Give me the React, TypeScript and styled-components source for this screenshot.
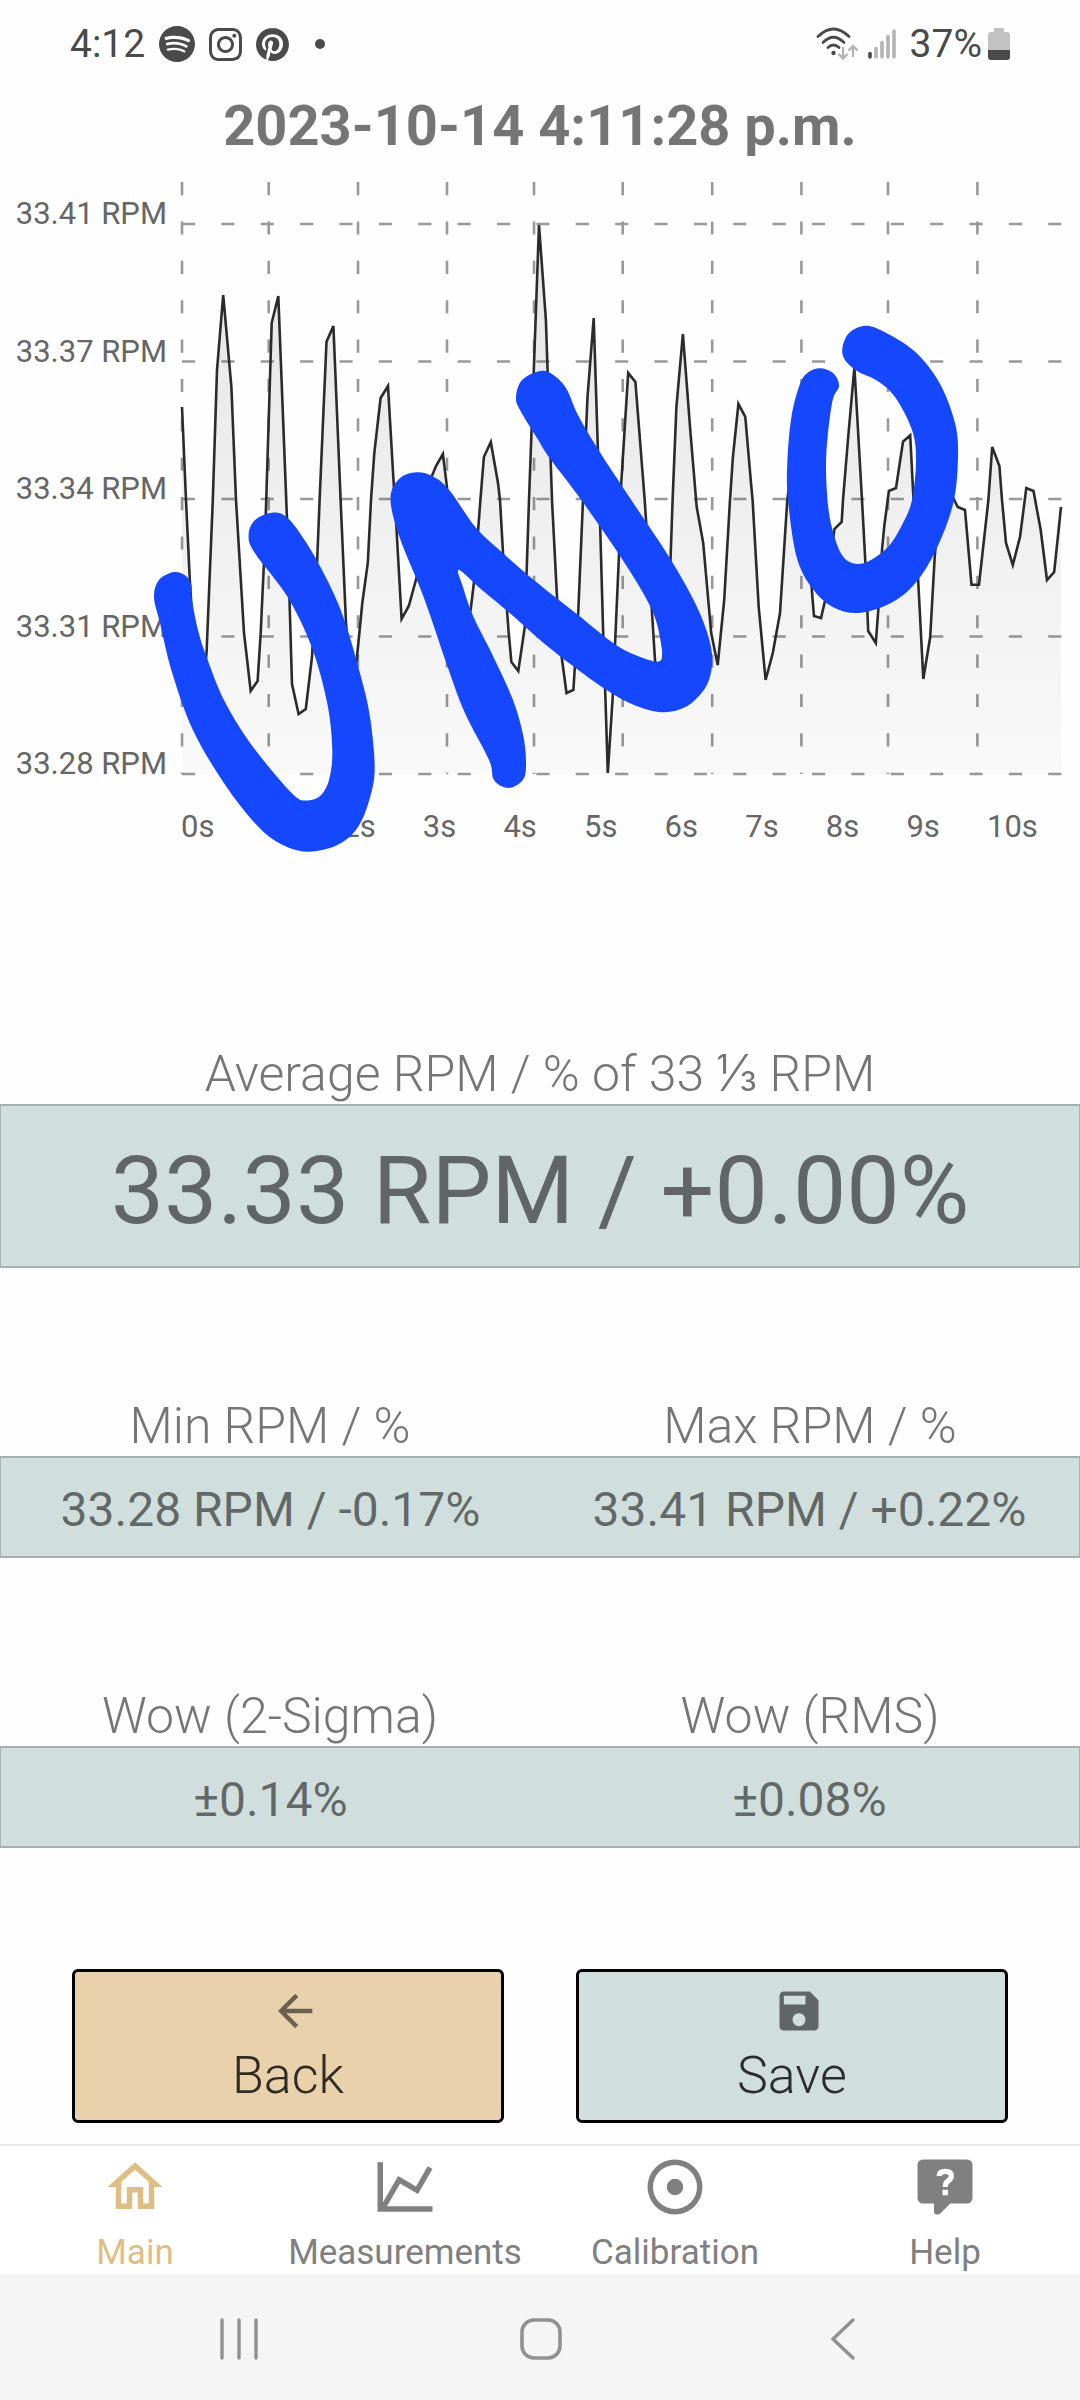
import React from "react";
import styled, { createGlobalStyle } from "styled-components";
import { SiInstagram, SiPinterest, SiSpotify } from "react-icons/si";

type Point = [number, number];

const GlobalStyle = createGlobalStyle`
  *, *::before, *::after { box-sizing: border-box; }
  body {
    margin: 0;
    background: #fefefe;
    color: rgba(0, 0, 0, 0.54);
    font-family: Roboto, Inter, "Liberation Sans", sans-serif;
  }
`;

const Screen = styled.div`
  display: flex;
  flex-direction: column;
  min-height: 100vh;
`;

/* ---------- status bar ---------- */

const StatusBar = styled.header`
  display: flex;
  align-items: center;
  justify-content: space-between;
  height: 88px;
  padding: 0 70px;
  color: #4a4a4a;
  font-size: 39px;
`;

const StatusGroup = styled.div<{ $gap: number }>`
  display: flex;
  align-items: center;
  gap: ${(p) => p.$gap}px;
`;

const Dot = styled.span`
  width: 10px;
  height: 10px;
  margin-left: 12px;
  border-radius: 50%;
  background: currentColor;
`;

const Battery = styled.span`
  display: flex;
  align-items: center;
  gap: 6px;
  margin-left: 4px;
`;

/* ---------- chart ---------- */

const Main = styled.main`
  display: flex;
  flex-direction: column;
  flex: 1;
`;

const Title = styled.h1`
  margin: 0;
  font-size: 56px;
  line-height: 76px;
  font-weight: 700;
  text-align: center;
`;

const ChartSvg = styled.svg`
  display: block;
  width: 100%;
  height: auto;
`;

const AxisText = styled.text`
  fill: #666;
  font-size: 31px;
`;

/* ---------- readings ---------- */

const Readings = styled.div`
  display: flex;
  flex-direction: column;
  gap: 128px;
  padding-top: 180px;
`;

const Reading = styled.dl<{ $columns: number }>`
  display: grid;
  grid-template-columns: repeat(${(p) => p.$columns}, 1fr);
  grid-template-rows: 60px auto;
  grid-auto-flow: column;
  margin: 0;
  text-align: center;
`;

const ReadingLabel = styled.dt`
  font-size: 50px;
  line-height: 60px;
  font-weight: 300;
`;

const ReadingValue = styled.dd<{ $large?: boolean }>`
  margin: 0;
  padding-top: ${(p) => (p.$large ? 10 : 6)}px;
  border: solid rgba(0, 0, 0, 0.2);
  border-width: 2px 0;
  background: #d0dedd;
  font-size: ${(p) => (p.$large ? 95 : 48)}px;
  line-height: ${(p) => (p.$large ? 150 : 92)}px;

  &:first-of-type { border-left-width: 1px; }
  &:last-of-type { border-right-width: 1px; }
`;

/* ---------- actions ---------- */

const Actions = styled.div`
  display: grid;
  grid-template-columns: 1fr 1fr;
  gap: 72px;
  padding: 121px 72px 21px;
`;

const ActionButton = styled.button<{ $color: string }>`
  display: flex;
  flex-direction: column;
  align-items: center;
  gap: 8px;
  padding: 13px;
  border: 3px solid #000;
  border-radius: 6px;
  background: ${(p) => p.$color};
  color: rgba(0, 0, 0, 0.8);
  font: inherit;
  font-size: 52px;
  line-height: 62px;
  font-weight: 300;

  svg {
    margin-left: 14px;
    fill: rgba(0, 0, 0, 0.54);
  }
`;

/* ---------- bottom bars ---------- */

const TabBar = styled.nav`
  display: grid;
  grid-template-columns: repeat(4, 1fr);
  height: 130px;
  border-top: 2px solid #e6e6e6;
  background: #fff;
`;

const Tab = styled.a<{ $active?: boolean }>`
  display: flex;
  flex-direction: column;
  align-items: center;
  gap: 12px;
  padding-top: 8px;
  color: ${(p) => (p.$active ? "#dfbe86" : "#808080")};
  font-size: 35px;
  line-height: 42px;
  text-decoration: none;

  svg { fill: currentColor; }
`;

const SystemBar = styled.footer`
  display: grid;
  grid-template-columns: repeat(3, 1fr);
  height: 126px;
  padding: 0 86px 0 88px;
  background: #f5f5f5;
`;

const SystemButton = styled.button`
  display: flex;
  align-items: center;
  justify-content: center;
  padding: 4px 0 0;
  border: 0;
  background: none;
  color: #919191;
`;

/* ---------- data ---------- */

const gridRows: { y: number; label: string }[] = [
  { y: 224, label: "33.41 RPM" },
  { y: 361.5, label: "33.37 RPM" },
  { y: 499, label: "33.34 RPM" },
  { y: 636.5, label: "33.31 RPM" },
  { y: 774, label: "33.28 RPM" },
];

const gridColumns = [182, 268.7, 358, 447, 534, 622.7, 712.2, 801.4, 888, 977.4];

const seconds = Array.from({ length: 11 }, (_, i) => i);

const trace: Point[] = [
  [182, 407], [186, 500], [189.8, 580], [196, 680], [202, 700], [206.6, 652], [212.8, 500],
  [217, 370], [223.2, 295], [231.4, 387], [236, 500], [244, 633], [250.7, 691], [257.6, 681],
  [260.7, 633], [265, 540], [271.7, 323], [278.3, 296], [286.9, 517], [289.6, 603], [292, 684],
  [298.6, 714], [305.8, 709], [312, 657], [317.2, 560], [319.6, 500], [326.5, 341.7],
  [333.4, 326], [340.6, 500], [346, 623], [352, 690], [357, 657], [362.3, 603], [367.8, 563],
  [371, 500], [374.3, 453], [380.6, 398], [388, 386], [393.3, 477], [396, 520], [401.6, 619],
  [408.8, 606], [416.7, 577], [422, 520], [429, 483], [436, 466], [442.9, 454], [446.7, 485],
  [453, 560], [460, 625], [466, 640], [471, 607], [474.6, 577], [480.4, 500], [483.9, 457],
  [490.8, 442], [498, 483], [500, 500], [503.8, 567], [508.7, 633], [511.4, 662], [518.3, 671],
  [524.8, 627], [529, 500], [533.8, 370], [539, 225], [545.9, 320], [548, 383], [552, 500],
  [557, 597], [561.7, 657], [566.5, 693], [573.4, 690], [578.2, 613], [583, 500], [587.5, 397],
  [593.7, 318], [597.9, 450], [600, 520], [603, 627], [605.4, 697], [607.8, 773], [612.7, 697],
  [615.8, 627], [618.9, 557], [621, 487], [628.2, 373], [635.4, 382], [644.7, 500], [652.3, 617],
  [655, 660], [660, 690], [665, 640], [670.5, 560], [672.6, 500], [676.4, 407], [682.9, 334],
  [690.5, 433], [696.7, 507], [703.2, 543], [711.2, 633], [717.7, 665], [724.2, 600], [730, 500],
  [732.9, 457], [738.4, 404], [745.3, 417], [751, 483], [752.6, 500], [758.7, 607], [765.6, 680],
  [772.8, 653], [780, 613], [787.3, 500], [797, 430], [805, 500], [812.4, 597], [814, 616],
  [821, 618], [825.2, 600], [834.4, 529], [841.7, 522], [843, 500], [848.2, 437], [854.4, 367],
  [862, 500], [865.4, 563], [868.2, 631], [875.8, 643], [878.5, 607], [882, 550], [884.4, 525],
  [888.9, 491], [896, 488], [903, 441.7], [910.2, 435.3], [913, 490], [918, 577], [923.3, 679],
  [930.2, 637], [934.7, 557], [942, 475], [953.3, 498], [957.7, 507], [965, 510], [971.5, 584.7],
  [979, 584.7], [988.4, 500], [992.2, 447], [999.4, 466], [1002, 500], [1006, 543], [1012.8, 565],
  [1020, 537], [1026.3, 488], [1033.5, 491], [1040.7, 530], [1047, 580], [1054.2, 572], [1061, 507],
];

/* Outlines of the three marker letters scribbled over the chart. */
const scribbles: Point[][] = [
  [
    [174, 572], [186, 576], [191.5, 586], [191.5, 597], [198, 630], [206.6, 657], [223.9, 700],
    [248, 740], [275.5, 775], [296, 797], [306.5, 800.5], [320, 796], [329, 780], [332.3, 750],
    [327.2, 703], [311.7, 647], [287.6, 597], [254.8, 553], [248.6, 535], [255, 520], [272, 512.7],
    [287.6, 518], [306.5, 543], [327.2, 580], [344.4, 620], [361, 677], [370, 717], [374.7, 767],
    [370.2, 797], [358, 827], [337.5, 845], [306.5, 851.7], [279, 843], [254.8, 823], [223.9, 783],
    [192.9, 730], [172.2, 673], [160, 623], [154, 597], [159, 580],
  ],
  [
    [508, 788], [494, 780], [489, 760], [464.9, 713], [447.7, 667], [423.6, 597], [399.5, 537],
    [390.5, 499], [399, 479], [416.7, 472.3], [434, 477], [450, 491], [475.3, 527], [502.8, 553],
    [540, 585], [578, 615], [616, 645], [643, 658], [660, 661], [661.5, 647], [652, 610],
    [622.7, 560], [581.3, 500], [550.3, 459], [537, 438], [520, 410], [516, 397], [522, 380],
    [540, 371], [552, 374], [566, 388], [578, 415], [598.5, 450], [631.3, 500], [671, 560],
    [698.4, 610], [711.5, 650], [709, 680], [695, 700], [678, 710], [657, 711.7], [629.5, 703],
    [602, 687], [567.6, 662], [540, 640], [509.7, 613], [482, 590], [459, 570], [463, 587],
    [473.5, 617], [492.5, 655], [513, 700], [523.5, 737], [526, 767], [522, 781],
  ],
  [
    [821, 368.3], [834, 374], [839, 386], [832.7, 400], [827.6, 437], [826, 470], [828.6, 510],
    [834.5, 537], [842, 555], [852, 563], [867, 562], [888, 547], [902, 525], [912, 500],
    [916, 460], [912, 430], [895, 397], [877.5, 381], [857, 371], [845, 360], [842.4, 348],
    [849, 333], [865.4, 325.7], [884.4, 332], [915.4, 352], [939.5, 383], [955, 423], [958, 457],
    [953.3, 503], [936, 550], [915.4, 583], [891, 603], [859, 613], [832.7, 607], [812, 588],
    [796.6, 557], [788, 500], [787.3, 463], [791.4, 417], [800, 384], [808.6, 372],
  ],
];

const tracePath = "M" + trace.map((p) => p.join(",")).join("L");

/* Closed Catmull-Rom spline through the points. */
function smoothOutline(points: Point[]): string {
  const n = points.length;
  let d = `M${points[0].join(",")}`;
  for (let i = 0; i < n; i++) {
    const p0 = points[(i + n - 1) % n];
    const p1 = points[i];
    const p2 = points[(i + 1) % n];
    const p3 = points[(i + 2) % n];
    const c1 = [p1[0] + (p2[0] - p0[0]) / 6, p1[1] + (p2[1] - p0[1]) / 6];
    const c2 = [p2[0] - (p3[0] - p1[0]) / 6, p2[1] - (p3[1] - p1[1]) / 6];
    d += `C${c1.join(",")} ${c2.join(",")} ${p2.join(",")}`;
  }
  return d + "Z";
}

const icons = {
  home: "M12 5.69L17 10.19V18H15V12H9V18H7V10.19L12 5.69M12 3L2 12H5V20H11V14H13V20H19V12H22Z",
  chart:
    "M16 11.78L20.24 4.45L21.97 5.45L16.74 14.5L10.23 10.75L5.46 19H22V21H2V3H4V17.54L9.5 8Z",
  disc: "M12 2a10 10 0 1 0 0 20a10 10 0 0 0 0-20M12 4a8 8 0 1 1 0 16a8 8 0 0 1 0-16M12 9a3 3 0 1 0 0 6a3 3 0 0 0 0-6Z",
  help: "M4 2A2 2 0 0 0 2 4V16A2 2 0 0 0 4 18H8V21A1 1 0 0 0 9 22H9.5C9.75 22 10 21.9 10.2 21.71L13.9 18H20A2 2 0 0 0 22 16V4A2 2 0 0 0 20 2Z",
  back: "M20 11V13H8L13.5 18.5L12.08 19.92L4.16 12L12.08 4.08L13.5 5.5L8 11Z",
  save: "M15 9H5V5H15M12 19A3 3 0 0 1 9 16A3 3 0 0 1 12 13A3 3 0 0 1 15 16A3 3 0 0 1 12 19M17 3H5A2 2 0 0 0 3 5V19A2 2 0 0 0 5 21H19A2 2 0 0 0 21 19V7Z",
};

function Icon({ name, size, children }: { name: keyof typeof icons; size: number; children?: React.ReactNode }) {
  return (
    <svg width={size} height={size} viewBox="0 0 24 24" fillRule="evenodd" aria-hidden="true">
      <path d={icons[name]} />
      {children}
    </svg>
  );
}

function WifiIcon() {
  return (
    <svg width="42" height="34" viewBox="0 0 42 34" fill="none" strokeLinecap="round" aria-hidden="true">
      <g stroke="currentColor" strokeWidth="2.8">
        <path d="M2 9.500Q17.500-5.500 33 9.500" />
        <path d="M7 15.500Q17.500 5 28 15.500" />
        <path d="M12 20.500Q17.500 15.500 23 20.500" />
      </g>
      <circle cx="17.500" cy="26" r="2.200" fill="currentColor" />
      <path d="M27 21V31M23 27.500L27 31.500L31 27.500M37 29V19.500M33 23L37 19L41 23" stroke="#b5b5b5" strokeWidth="2.400" />
    </svg>
  );
}

function SignalIcon() {
  return (
    <svg width="28" height="30" viewBox="0 0 28 30" strokeWidth="3.600" strokeLinecap="round" aria-hidden="true">
      <path d="M2 24.500V28" stroke="#4a4a4a" />
      <path d="M8 19.500V28M14 13.500V28M20 7.500V28M26 2V28" stroke="#b5b5b5" />
    </svg>
  );
}

function BatteryIcon() {
  return (
    <svg width="22" height="34" viewBox="0 0 22 34" aria-hidden="true">
      <path d="M6 5V2Q6 1 7 1H15Q16 1 16 2V5H19Q22 5 22 8V23H0V8Q0 5 3 5Z" fill="#c2c2c2" />
      <path d="M0 23H22V30Q22 33 19 33H3Q0 33 0 30Z" fill="#4a4a4a" />
    </svg>
  );
}

function SpeedChart() {
  return (
    <ChartSvg viewBox="0 164 1080 700" role="img" aria-label="Platter speed over time">
      <defs>
        <linearGradient id="fade" gradientUnits="userSpaceOnUse" x1="0" y1="224" x2="0" y2="774">
          <stop offset="0" stopOpacity="0.1" />
          <stop offset="1" stopOpacity="0.02" />
        </linearGradient>
      </defs>
      <g stroke="#999" strokeWidth="2.600" strokeDasharray="13.125 26.250">
        {gridRows.map((row) => (
          <line key={row.y} x1="182" x2="1062" y1={row.y} y2={row.y} />
        ))}
        {gridColumns.map((x) => (
          <line key={x} x1={x} x2={x} y1="182" y2="774" />
        ))}
      </g>
      <path d={`${tracePath}V774H182Z`} fill="url(#fade)" />
      <path d={tracePath} fill="none" stroke="#2b2b2b" strokeWidth="2.600" />
      {gridRows.map((row) => (
        <AxisText key={row.label} x="167" y={row.y} textAnchor="end">
          {row.label}
        </AxisText>
      ))}
      {seconds.map((s) => (
        <AxisText key={s} x={181 + s * 80.6} y="837">
          {s}s
        </AxisText>
      ))}
      {scribbles.map((points, i) => (
        <path key={i} d={smoothOutline(points)} fill="#1547ff" />
      ))}
    </ChartSvg>
  );
}

export default function App() {
  return (
    <Screen>
      <GlobalStyle />
      <StatusBar>
        <StatusGroup $gap={14}>
          <span>4:12</span>
          <SiSpotify size={36} />
          <SiInstagram size={33} />
          <SiPinterest size={33} />
          <Dot />
        </StatusGroup>
        <StatusGroup $gap={10}>
          <WifiIcon />
          <SignalIcon />
          <Battery>
            37%
            <BatteryIcon />
          </Battery>
        </StatusGroup>
      </StatusBar>

      <Main>
        <Title>2023-10-14 4:11:28 p.m.</Title>
        <SpeedChart />

        <Readings>
          <Reading $columns={1}>
            <ReadingLabel>Average RPM / % of 33 ⅓ RPM</ReadingLabel>
            <ReadingValue $large>33.33 RPM / +0.00%</ReadingValue>
          </Reading>
          <Reading $columns={2}>
            <ReadingLabel>Min RPM / %</ReadingLabel>
            <ReadingValue>33.28 RPM / -0.17%</ReadingValue>
            <ReadingLabel>Max RPM / %</ReadingLabel>
            <ReadingValue>33.41 RPM / +0.22%</ReadingValue>
          </Reading>
          <Reading $columns={2}>
            <ReadingLabel>Wow (2-Sigma)</ReadingLabel>
            <ReadingValue>±0.14%</ReadingValue>
            <ReadingLabel>Wow (RMS)</ReadingLabel>
            <ReadingValue>±0.08%</ReadingValue>
          </Reading>
        </Readings>

        <Actions>
          <ActionButton type="button" $color="#e9d1ac">
            <Icon name="back" size={52} />
            Back
          </ActionButton>
          <ActionButton type="button" $color="#d0dedd">
            <Icon name="save" size={52} />
            Save
          </ActionButton>
        </Actions>
      </Main>

      <TabBar>
        <Tab href="#main" $active>
          <Icon name="home" size={66} />
          Main
        </Tab>
        <Tab href="#measurements">
          <Icon name="chart" size={66} />
          Measurements
        </Tab>
        <Tab href="#calibration">
          <Icon name="disc" size={66} />
          Calibration
        </Tab>
        <Tab href="#help">
          <Icon name="help" size={66}>
            <path
              d="M9.900 8Q9.900 6.300 12.100 6.300Q14.300 6.300 14.300 8Q14.300 9 13.200 9.700Q12.100 10.400 12.100 12"
              style={{ fill: "none" }}
              stroke="#fff"
              strokeWidth="1.900"
            />
            <rect x="11.100" y="13" width="2" height="2" style={{ fill: "#fff" }} />
          </Icon>
          Help
        </Tab>
      </TabBar>

      <SystemBar>
        <SystemButton type="button" aria-label="Recent apps">
          <svg width="40" height="42" viewBox="0 0 40 42" stroke="currentColor" strokeWidth="3.400" strokeLinecap="round">
            <path d="M3 2V40M20 2V40M37 2V40" />
          </svg>
        </SystemButton>
        <SystemButton type="button" aria-label="Home">
          <svg width="42" height="42" viewBox="0 0 42 42" fill="none" stroke="currentColor" strokeWidth="3.600">
            <rect x="2" y="2" width="38" height="38" rx="12" />
          </svg>
        </SystemButton>
        <SystemButton type="button" aria-label="Back">
          <svg width="24" height="42" viewBox="0 0 24 42" fill="none" stroke="currentColor" strokeWidth="3.400" strokeLinecap="round">
            <path d="M22 2L2 21L22 40" />
          </svg>
        </SystemButton>
      </SystemBar>
    </Screen>
  );
}
